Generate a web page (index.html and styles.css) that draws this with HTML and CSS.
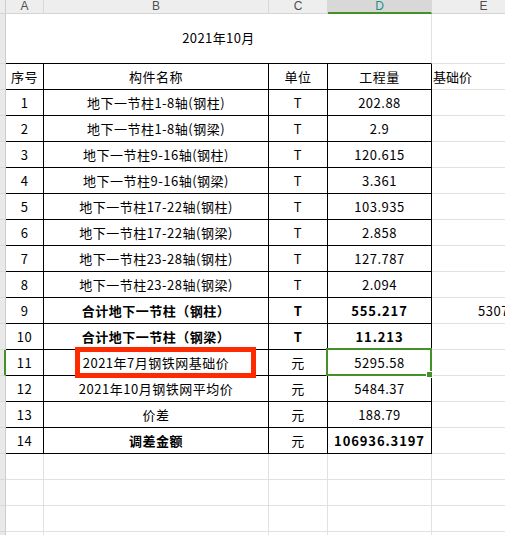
FILE: index.html
```html
<!DOCTYPE html>
<html lang="zh-CN">
<head>
<meta charset="utf-8">
<title>钢铁网调差</title>
<link rel="stylesheet" href="styles.css">
</head>
<body>
<div class="viewport">
  <div class="sheet">
    <!-- column headers -->
    <div class="rh corner"></div>
    <div class="ch">A</div>
    <div class="ch">B</div>
    <div class="ch">C</div>
    <div class="ch ch-sel">D</div>
    <div class="ch">E</div>

    <!-- title row -->
    <div class="rh"></div>
    <div class="title">2021年10月</div>
    <div class="g"></div>

    <!-- header row -->
    <div class="rh"></div>
    <div class="t">序号</div>
    <div class="t">构件名称</div>
    <div class="t">单位</div>
    <div class="t">工程量</div>
    <div class="g left">基础价</div>

    <div class="rh"></div><div class="t">1</div><div class="t">地下一节柱1-8轴(钢柱)</div><div class="t">T</div><div class="t">202.88</div><div class="g"></div>
    <div class="rh"></div><div class="t">2</div><div class="t">地下一节柱1-8轴(钢梁)</div><div class="t">T</div><div class="t">2.9</div><div class="g"></div>
    <div class="rh"></div><div class="t">3</div><div class="t">地下一节柱9-16轴(钢柱)</div><div class="t">T</div><div class="t">120.615</div><div class="g"></div>
    <div class="rh"></div><div class="t">4</div><div class="t">地下一节柱9-16轴(钢梁)</div><div class="t">T</div><div class="t">3.361</div><div class="g"></div>
    <div class="rh"></div><div class="t">5</div><div class="t">地下一节柱17-22轴(钢柱)</div><div class="t">T</div><div class="t">103.935</div><div class="g"></div>
    <div class="rh"></div><div class="t">6</div><div class="t">地下一节柱17-22轴(钢梁)</div><div class="t">T</div><div class="t">2.858</div><div class="g"></div>
    <div class="rh"></div><div class="t">7</div><div class="t">地下一节柱23-28轴(钢柱)</div><div class="t">T</div><div class="t">127.787</div><div class="g"></div>
    <div class="rh"></div><div class="t">8</div><div class="t">地下一节柱23-28轴(钢梁)</div><div class="t">T</div><div class="t">2.094</div><div class="g"></div>
    <div class="rh"></div><div class="t">9</div><div class="t b">合计地下一节柱（钢柱）</div><div class="t b">T</div><div class="t b num">555.217</div><div class="g right">5307.94</div>
    <div class="rh"></div><div class="t">10</div><div class="t b">合计地下一节柱（钢梁）</div><div class="t b">T</div><div class="t b num">11.213</div><div class="g"></div>
    <div class="rh rh-sel"></div><div class="t">11</div><div class="t">2021年7月钢铁网基础价</div><div class="t">元</div><div class="t">5295.58</div><div class="g"></div>
    <div class="rh"></div><div class="t">12</div><div class="t">2021年10月钢铁网平均价</div><div class="t">元</div><div class="t">5484.37</div><div class="g"></div>
    <div class="rh"></div><div class="t">13</div><div class="t">价差</div><div class="t">元</div><div class="t">188.79</div><div class="g"></div>
    <div class="rh"></div><div class="t">14</div><div class="t b">调差金额</div><div class="t">元</div><div class="t b num">106936.3197</div><div class="g"></div>

    <div class="rh"></div><div class="g"></div><div class="g"></div><div class="g"></div><div class="g"></div><div class="g"></div>
    <div class="rh"></div><div class="g"></div><div class="g"></div><div class="g"></div><div class="g"></div><div class="g"></div>
    <div class="rh"></div><div class="g"></div><div class="g"></div><div class="g"></div><div class="g"></div><div class="g"></div>
    <div class="rh"></div><div class="g"></div><div class="g"></div><div class="g"></div><div class="g"></div><div class="g"></div>

    <div class="selection"><span class="handle"></span></div>
    <div class="mark"></div>
  </div>
</div>
</body>
</html>
```

FILE: styles.css
```css
html, body {
  margin: 0;
  padding: 0;
  background: #ffffff;
}

.viewport {
  width: 505px;
  height: 535px;
  overflow: hidden;
}

.sheet {
  position: relative;
  display: grid;
  grid-template-columns: 6px 38px 225px 59px 104px 104px;
  grid-template-rows: 14px 50px;
  grid-auto-rows: 26px;
  width: 536px;
  font-family: "Noto Sans CJK SC", "Noto Sans", sans-serif;
  font-size: 13px;
  color: #000;
}

.sheet > div {
  box-sizing: border-box;
}

.rh {
  background: #e9e9e9;
  border-right: 1px solid #cdcdcd;
  border-bottom: 1px solid #d9d9d9;
}

.rh-sel {
  border-right: 2px solid #46902a;
}

.corner {
  background: #ececec;
  border-bottom: 1px solid #d4d4d4;
}

.ch {
  background: #eeeeee;
  border-right: 1px solid #d8d8d8;
  border-bottom: 1px solid #d4d4d4;
  font-family: "Liberation Sans", "Noto Sans", sans-serif;
  font-size: 12px;
  line-height: 13px;
  color: #505050;
  text-align: center;
}

.ch-sel {
  background: #d8d8d8;
  border-bottom: 2px solid #46902a;
  color: #1f8f86;
}

.title {
  grid-column: span 4;
  display: flex;
  align-items: center;
  justify-content: center;
  border-right: 1px solid #e1e1e1;
  border-bottom: 1px solid #000;
  padding-bottom: 2px;
  letter-spacing: 0.4px;
}

.g {
  border-right: 1px solid #e1e1e1;
  border-bottom: 1px solid #e1e1e1;
  display: flex;
  align-items: center;
  white-space: nowrap;
}

.left {
  justify-content: flex-start;
  padding-left: 1px;
}

.right {
  justify-content: flex-end;
  padding-right: 6px;
  letter-spacing: 0.6px;
}

.t {
  display: flex;
  align-items: center;
  justify-content: center;
  border-right: 1px solid #000;
  border-bottom: 1px solid #000;
  white-space: nowrap;
  letter-spacing: 0.5px;
}

.b {
  font-weight: 700;
}

.num {
  letter-spacing: 0.9px;
}

.selection {
  position: absolute;
  left: 326px;
  top: 348px;
  width: 106px;
  height: 28px;
  box-sizing: border-box;
  border: 2px solid #46902a;
  pointer-events: none;
}

.handle {
  position: absolute;
  right: -3px;
  bottom: -4px;
  width: 5px;
  height: 5px;
  background: #46902a;
  border: 1px solid #ffffff;
}

.mark {
  position: absolute;
  left: 75px;
  top: 347px;
  width: 181px;
  height: 31px;
  box-sizing: border-box;
  border: 5px solid #ff2a00;
  pointer-events: none;
}
```
